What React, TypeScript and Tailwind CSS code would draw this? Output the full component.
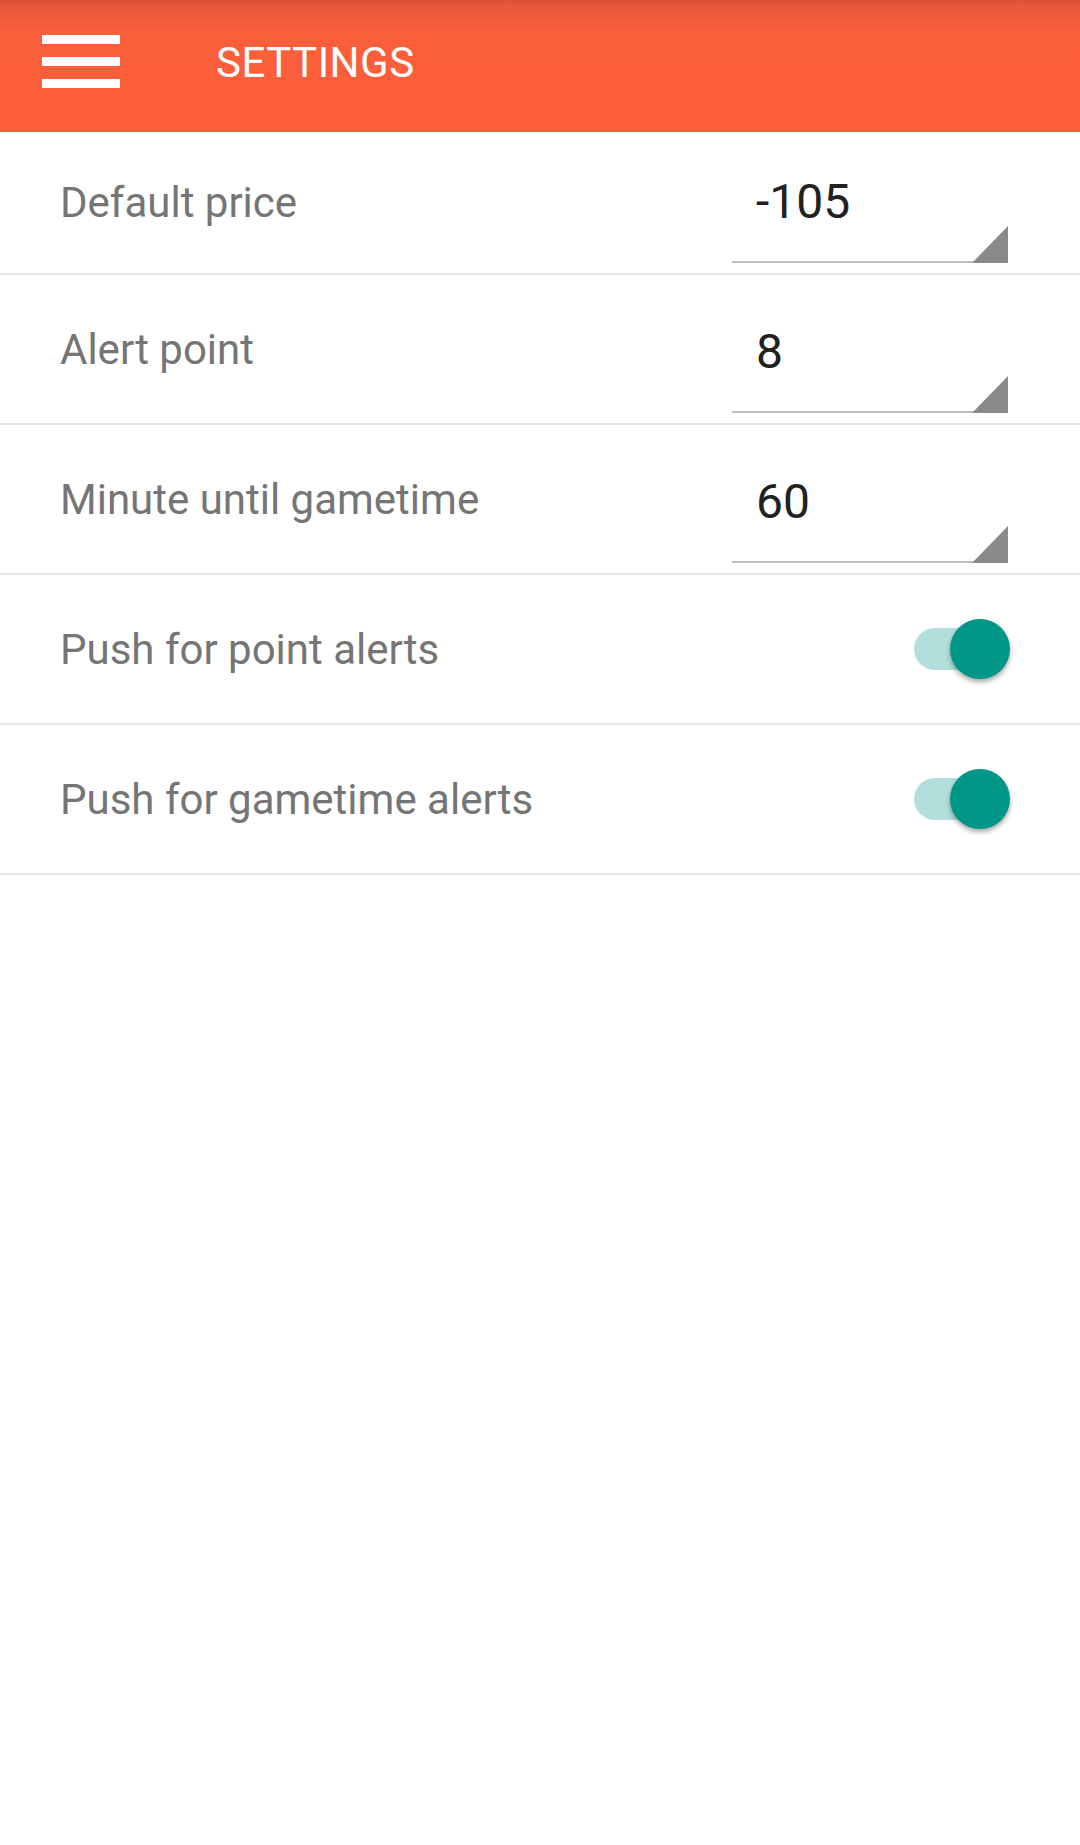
import React from "react";

function Field({ value }: { value: string }) {
  return (
    <div className="relative w-[276px] self-end mb-[10px] mr-[2px]">
      <div className="pl-[24px] text-[48px] leading-[48px] text-[#212121]">{value}</div>
      <div className="h-[35px]" />
      <div className="h-[2px] bg-[#bdbdbd]" />
      <div className="absolute right-0 bottom-0 w-[36px] h-[37px] bg-[#8a8a8a] [clip-path:polygon(100%_0,100%_100%,0_100%)]" />
    </div>
  );
}

function Toggle() {
  return (
    <div className="relative w-[96px] h-[60px]">
      <div className="absolute left-0 top-[9px] w-[90px] h-[42px] rounded-full bg-[#b2dfdb]" />
      <div className="absolute right-0 top-0 w-[60px] h-[60px] rounded-full bg-[#009688] shadow-[0_3px_5px_rgba(0,0,0,0.35)]" />
    </div>
  );
}

function Row({ label, children, first }: { label: string; children: React.ReactNode; first?: boolean }) {
  return (
    <div
      className={`flex items-center justify-between pl-[60px] pr-[70px] border-b-[2px] border-[#e5e5e5] ${
        first ? "h-[143px]" : "h-[150px]"
      }`}
    >
      <div className="text-[42px] text-[#757575]">{label}</div>
      {children}
    </div>
  );
}

export default function App() {
  return (
    <div className="w-[1080px] min-h-[1845px] bg-white" style={{ fontFamily: "Roboto, 'Noto Sans', sans-serif" }}>
      <div className="h-[132px] flex items-start bg-[linear-gradient(to_bottom,#d95132_0px,#e5573a_4px,#fb5e3a_32px,#fc5e3a_100%)]">
        <div className="ml-[42px] mt-[35px] flex flex-col gap-[13px]">
          <div className="w-[78px] h-[9px] bg-white" />
          <div className="w-[78px] h-[9px] bg-white" />
          <div className="w-[78px] h-[9px] bg-white" />
        </div>
        <div className="ml-[96px] mt-[42px] text-[42px] leading-[42px] text-white tracking-[0.5px]">SETTINGS</div>
      </div>
      <Row label="Default price" first>
        <Field value="-105" />
      </Row>
      <Row label="Alert point">
        <Field value="8" />
      </Row>
      <Row label="Minute until gametime">
        <Field value="60" />
      </Row>
      <Row label="Push for point alerts">
        <Toggle />
      </Row>
      <Row label="Push for gametime alerts">
        <Toggle />
      </Row>
    </div>
  );
}
